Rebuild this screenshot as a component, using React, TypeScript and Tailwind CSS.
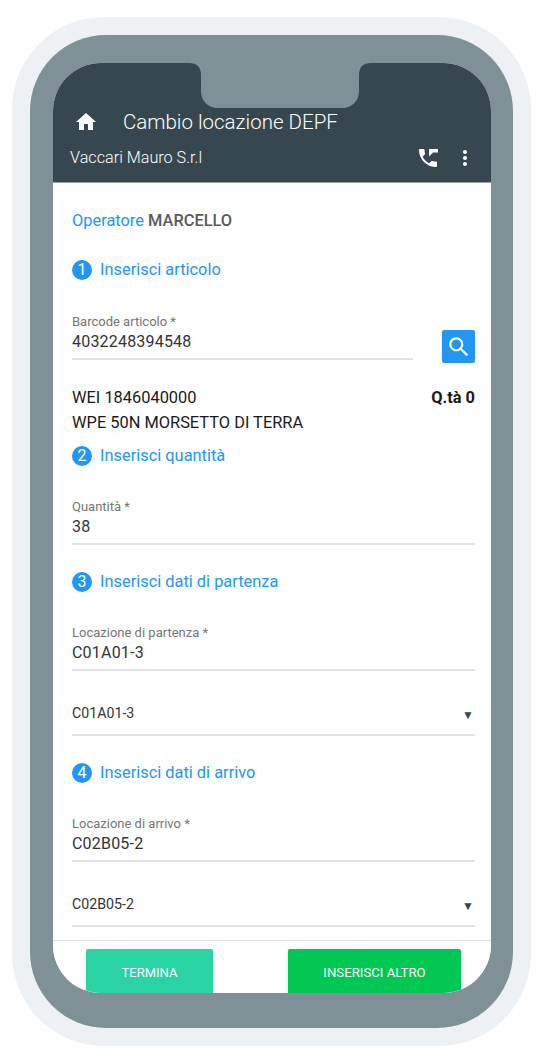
function Icon({ d, size = 24, className = "" }: { d: string; size?: number; className?: string }) {
  return (
    <svg width={size} height={size} viewBox="0 0 24 24" fill="currentColor" className={className}>
      <path d={d} />
    </svg>
  );
}

const homePath = "M10 20v-6h4v6h5v-8h3L12 3 2 12h3v8z";
const phonePath =
  "M20 15.5c-1.25 0-2.45-.2-3.57-.57-.35-.11-.74-.03-1.02.24l-2.2 2.2c-2.83-1.44-5.15-3.75-6.59-6.59l2.2-2.21c.28-.27.36-.66.25-1.01C8.7 6.45 8.5 5.25 8.5 4c0-.55-.45-1-1-1H4c-.55 0-1 .45-1 1 0 9.39 7.61 17 17 17 .55 0 1-.45 1-1v-3.5c0-.55-.45-1-1-1zM13 3h9v3.5h-5L13 10.5z";
const dotsPath =
  "M12 8c1.1 0 2-.9 2-2s-.9-2-2-2-2 .9-2 2 .9 2 2 2zm0 2c-1.1 0-2 .9-2 2s.9 2 2 2 2-.9 2-2-.9-2-2-2zm0 6c-1.1 0-2 .9-2 2s.9 2 2 2 2-.9 2-2-.9-2-2-2z";
const searchPath =
  "M15.5 14h-.79l-.28-.27C15.41 12.59 16 11.11 16 9.5 16 5.91 13.09 3 9.5 3S3 5.91 3 9.5 5.91 16 9.5 16c1.61 0 3.09-.59 4.23-1.57l.27.28v.79l5 4.99L20.49 19l-4.99-5zm-6 0C7.01 14 5 11.99 5 9.5S7.01 5 9.5 5 14 7.01 14 9.5 11.99 14 9.5 14z";

function Step({ n, title, className }: { n: number; title: string; className: string }) {
  return (
    <div className={`flex items-center gap-[8px] h-5 ${className}`}>
      <span className="w-5 h-5 rounded-full bg-[#2196f3] text-white text-[16px] leading-5 text-center">{n}</span>
      <span className="text-[16.4px] text-[#2196f3]">{title}</span>
    </div>
  );
}

function Field({ label, value, className = "" }: { label: string; value: string; className?: string }) {
  return (
    <div className={`border-b-2 border-[#dfe3e8] h-[46px] ${className}`}>
      <div className="text-[13px] leading-4 text-[#757575]">{label}</div>
      <div className="text-[16px] leading-6 text-[#333] tracking-[0.2px]">{value}</div>
    </div>
  );
}

function SelectRow({ value, className = "" }: { value: string; className?: string }) {
  return (
    <div className={`flex items-center justify-between border-b-2 border-[#dfe3e8] h-[43px] ${className}`}>
      <span className="text-[14.2px] text-[#333]">{value}</span>
      <span className="text-[12px] text-[#37474f] mr-[1px] mt-[3px]">▼</span>
    </div>
  );
}

export default function App() {
  return (
    <div className="w-[541px] h-[1061px] bg-white pt-[17px] pl-[12px] font-['Roboto',sans-serif]">
      <div className="w-[519px] h-[1029px] rounded-[92px] bg-[#eef1f4] p-[18px]">
        <div className="w-[483px] h-[993px] rounded-[76px] bg-[#7f9196] pt-[28px] px-[23px]">
          <div className="relative w-[438px] h-[930px] rounded-[48px] bg-white overflow-hidden">
            <header className="h-[120px] bg-[#37474f] text-white border-b border-[#90a4ae]">
              <div className="flex items-center h-[48px] pt-[35px] pl-[21px] box-content">
                <Icon d={homePath} />
                <h1 className="ml-[25px] text-[20.5px] font-light">Cambio locazione DEPF</h1>
              </div>
              <div className="flex items-center justify-between -mt-[37px] pt-[25px] pl-[17px] pr-[14px] h-[48px] box-content">
                <span className="text-[16.2px] font-light">Vaccari Mauro S.r.l</span>
                <div className="flex items-center gap-[13px]">
                  <Icon d={phonePath} />
                  <Icon d={dotsPath} />
                </div>
              </div>
            </header>
            <main className="pl-[19px] pr-[16px] pt-[29px]">
              <div className="text-[16.4px] leading-[18px] font-medium text-[#2196f3]">
                <span className="font-normal">Operatore</span> <span className="text-[#5a5a5a]">MARCELLO</span>
              </div>
              <Step n={1} title="Inserisci articolo" className="mt-[30px]" />
              <div className="flex items-end justify-between mt-[34px]">
                <Field label="Barcode articolo *" value="4032248394548" className="w-[341px]" />
                <button className="w-[33px] h-[33px] mb-[-3px] rounded-[2px] bg-[#2196f3] flex items-center justify-center text-white">
                  <Icon d={searchPath} size={26} />
                </button>
              </div>
              <div className="flex justify-between mt-[26px] text-[16.4px] leading-[24px] text-[#1a1a1a]">
                <span>WEI 1846040000</span>
                <span className="font-bold">Q.tà 0</span>
              </div>
              <div className="mt-[1px] text-[16.4px] leading-[24px] text-[#1a1a1a]">WPE 50N MORSETTO DI TERRA</div>
              <Step n={2} title="Inserisci quantità" className="mt-[11px]" />
              <Field label="Quantità *" value="38" className="mt-[33px]" />
              <Step n={3} title="Inserisci dati di partenza" className="mt-[27px]" />
              <Field label="Locazione di partenza *" value="C01A01-3" className="mt-[33px]" />
              <SelectRow value="C01A01-3" className="mt-[22px]" />
              <Step n={4} title="Inserisci dati di arrivo" className="mt-[27px]" />
              <Field label="Locazione di arrivo *" value="C02B05-2" className="mt-[33px]" />
              <SelectRow value="C02B05-2" className="mt-[22px]" />
            </main>
            <footer className="absolute left-0 right-0 top-[877px] h-[60px] border-t border-[#dfe3e8] pt-2 pl-[33px] flex items-start bg-white">
              <button className="w-[127px] h-[48px] rounded-[2px] bg-[#29d3a4] text-white text-[13px] shadow-md">TERMINA</button>
              <button className="w-[173px] h-[48px] ml-[75px] rounded-[2px] bg-[#00c853] text-white text-[13.2px] shadow-md">INSERISCI ALTRO</button>
            </footer>
            <svg className="absolute left-[136px] top-0" width="182" height="46" viewBox="0 0 182 46">
              <path d="M0 0 C8 0 12 4 12 12 V28 C12 38 19 45 29 45 H153 C163 45 170 38 170 28 V12 C170 4 174 0 182 0 Z" fill="#7f9196" />
            </svg>
          </div>
        </div>
      </div>
    </div>
  );
}
